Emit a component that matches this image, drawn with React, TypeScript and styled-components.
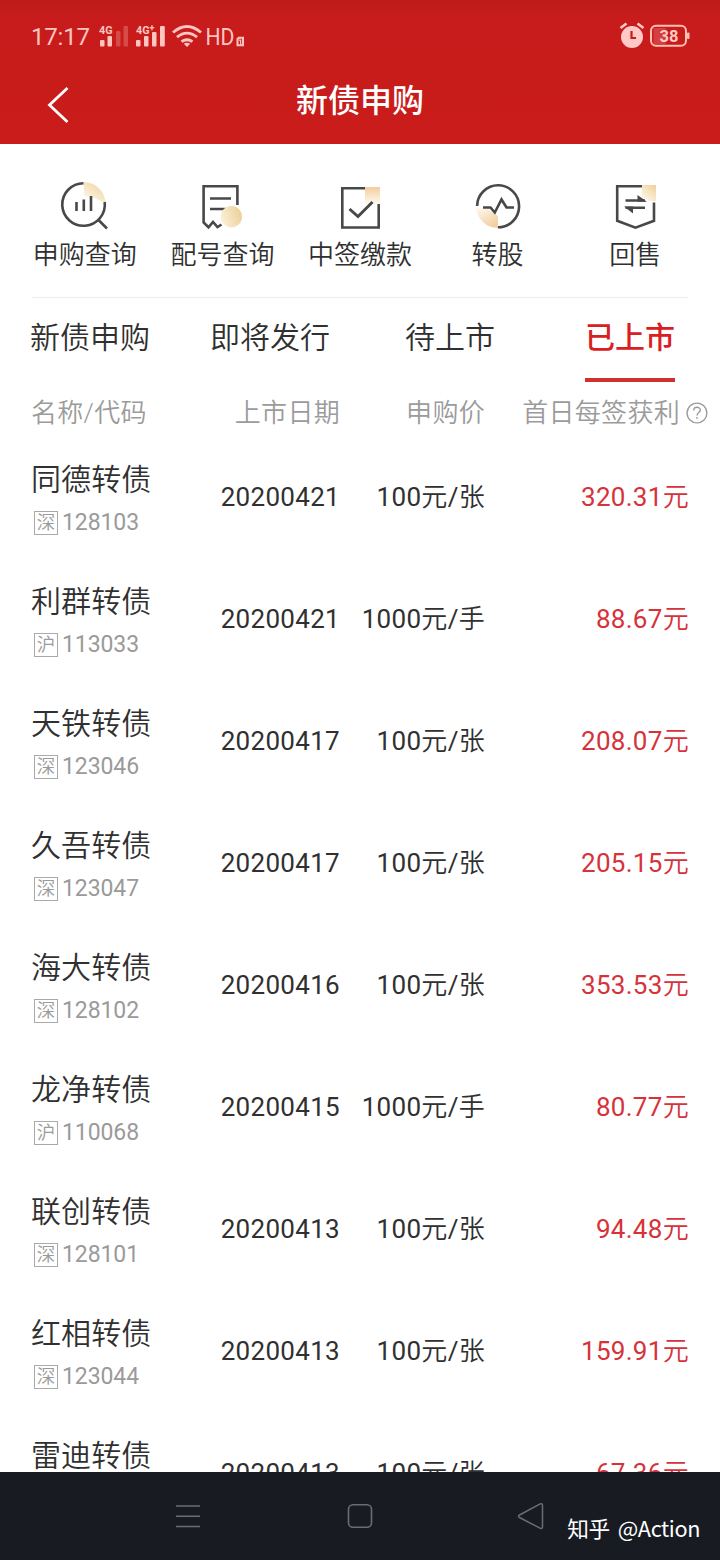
import React from "react";
import styled, { createGlobalStyle } from "styled-components";

const Global = createGlobalStyle`
  * { box-sizing: border-box; }
  body {
    margin: 0;
    background: #fff;
    font-family: Roboto, "Noto Sans CJK SC", sans-serif;
    font-weight: 350;
    color: #303030;
  }
`;

const Screen = styled.div`
  position: relative;
  display: flex;
  flex-direction: column;
  width: 720px;
  height: 1560px;
  overflow: hidden;
  background: #fff;
`;

const Header = styled.header`
  flex: none;
  height: 144px;
  background: linear-gradient(#bd1c1a 0, #c71c1b 18px, #c91c1b 100%);
`;

const StatusBar = styled.div`
  display: flex;
  justify-content: space-between;
  align-items: center;
  height: 72px;
  padding: 0 29px 0 31px;
  color: #ffc5c1;
`;

const StatusGroup = styled.div`
  display: flex;
  align-items: center;
  gap: 3px;
`;

const Clock = styled.span`
  width: 64px;
  font-size: 24px;
  font-weight: 400;
  line-height: 28px;
  letter-spacing: -0.2px;
  padding-top: 2px;
`;

const TitleBar = styled.div`
  display: grid;
  grid-template-columns: 120px 1fr 120px;
  align-items: center;
  height: 72px;
`;

const BackIcon = styled.svg`
  margin: -7px 0 0 46px;
`;

const Title = styled.h1`
  margin: 0;
  padding-bottom: 15px;
  text-align: center;
  font-size: 32px;
  line-height: 48px;
  font-weight: 500;
  color: #fff;
`;

const Actions = styled.nav`
  flex: none;
  display: grid;
  grid-template-columns: repeat(5, 1fr);
  height: 153px;
  padding: 34px 16px 0;
`;

const Action = styled.div`
  display: flex;
  flex-direction: column;
  align-items: center;
  font-size: 26px;
  line-height: 38px;
  white-space: nowrap;

  svg { margin-bottom: 2px; }
`;

const Divider = styled.div`
  flex: none;
  height: 1px;
  margin: 0 32px;
  background: #ececec;
`;

const Tabs = styled.div`
  flex: none;
  display: grid;
  grid-template-columns: repeat(4, 1fr);
  height: 84px;
`;

const Tab = styled.div<{ $active?: boolean }>`
  justify-self: center;
  height: 84px;
  padding-top: 18px;
  font-size: 30px;
  line-height: 44px;
  font-weight: ${(p) => (p.$active ? 500 : 350)};
  color: ${(p) => (p.$active ? "#d8211f" : "#303030")};
  border-bottom: 4px solid ${(p) => (p.$active ? "#cf3030" : "transparent")};
`;

const TableHead = styled.div`
  flex: none;
  display: grid;
  grid-template-columns: 150px 159px 145px 1fr;
  align-items: center;
  height: 54px;
  padding: 8px 12px 0 31px;
  font-size: 26px;
  line-height: 38px;
  letter-spacing: 0.3px;
  color: #9b9b9b;
`;

const HeadCell = styled.div`
  display: flex;
  justify-content: flex-end;
  align-items: center;
  gap: 6px;
  white-space: nowrap;

  &:first-child { justify-content: flex-start; }
`;

const List = styled.div`
  flex: 1;
  min-height: 0;
  overflow: hidden;
`;

const Row = styled.div`
  display: grid;
  grid-template-columns: 150px 159px 145px 1fr;
  align-items: center;
  height: 122px;
  padding: 0 31px;
`;

const Bond = styled.div`
  padding-top: 7px;
`;

const BondName = styled.div`
  font-size: 30px;
  line-height: 44px;
  letter-spacing: 0.1px;
  white-space: nowrap;
`;

const BondCode = styled.div`
  display: flex;
  align-items: center;
  gap: 4px;
  height: 42px;
  padding-left: 3px;
  font-size: 23px;
  font-weight: 400;
  letter-spacing: -0.1px;
  color: #9a9a9a;
`;

const Market = styled.span`
  display: flex;
  align-items: center;
  justify-content: center;
  width: 24px;
  height: 24px;
  border: 1px solid #aaa;
  font-size: 18.5px;
  font-weight: 350;
  line-height: 22px;
`;

const Value = styled.div<{ $red?: boolean }>`
  text-align: right;
  font-size: 26px;
  line-height: 38px;
  letter-spacing: 0.3px;
  white-space: nowrap;
  color: ${(p) => (p.$red ? "#d6323a" : "#303030")};
`;

const Digits = styled.span`
  font-weight: 400;
`;

const NavBar = styled.footer`
  flex: none;
  display: flex;
  height: 88px;
  padding-left: 102px;
  background: #191b22;

  svg { flex: none; margin-top: 28px; }
`;

const NavSlot = styled.div`
  display: flex;
  justify-content: center;
  width: 172px;
`;

const Watermark = styled.div`
  position: absolute;
  right: 20px;
  bottom: 15px;
  font-family: "Noto Sans CJK SC", sans-serif;
  font-weight: 400;
  font-size: 21.7px;
  line-height: 34px;
  letter-spacing: -0.4px;
  word-spacing: 3.5px;
  color: #fff;
`;

const ink = { fill: "none", stroke: "#484848", strokeWidth: 2.6 };

const Gold = ({ id }: { id: string }) => (
  <linearGradient id={id} x1="1" y1="0" x2="0.3" y2="1">
    <stop offset="0" stopColor="#efd09a" />
    <stop offset="1" stopColor="#fdf6e6" />
  </linearGradient>
);

const QueryIcon = () => (
  <svg width="56" height="56" viewBox="0.5 0 56 56">
    <defs><Gold id="g1" /></defs>
    <path d="M27 4A22 22 0 0 1 49 25L38 20L28 18Z" fill="url(#g1)" />
    <path d="M27 5.2A21.3 21.3 0 1 0 48.2 24M42 42L50.5 50.5" {...ink} />
    <path d="M20 24v9M27.3 21.5v11.5M34.5 18v15" {...ink} />
  </svg>
);

const NumberIcon = () => (
  <svg width="56" height="56" viewBox="0 0 56 56">
    <defs>
      <linearGradient id="g2" x1="1" y1="0.3" x2="0" y2="0.6">
        <stop offset="0" stopColor="#eccf96" />
        <stop offset="1" stopColor="#fbf0da" />
      </linearGradient>
    </defs>
    <path d="M43.4 27V8.3H9.6V44.5L14.5 49.3L19 44L23.5 49L27.5 46.5" {...ink} />
    <path d="M16 20.5H37M16 31H31.5" {...ink} />
    <circle cx="37.3" cy="38.8" r="10.7" fill="url(#g2)" />
  </svg>
);

const PayIcon = () => (
  <svg width="56" height="56" viewBox="0 0 56 56">
    <defs>
      <linearGradient id="g3" x1="0" y1="0" x2="0" y2="1">
        <stop offset="0" stopColor="#f3cd9c" />
        <stop offset="1" stopColor="#fffaf0" />
      </linearGradient>
    </defs>
    <path d="M33 9H48V26H33Z" fill="url(#g3)" />
    <path d="M33 10.3H10.3V49.5H46.7V26" {...ink} />
    <path d="M17.5 31L26 38.5L40.5 24" {...ink} strokeWidth={3} />
  </svg>
);

const ConvertIcon = () => (
  <svg width="56" height="56" viewBox="0 0 56 56">
    <defs>
      <linearGradient id="g4" x1="0" y1="0" x2="0.6" y2="1">
        <stop offset="0" stopColor="#fffaf0" />
        <stop offset="1" stopColor="#f3cfa0" />
      </linearGradient>
    </defs>
    <path d="M6 30A22 22 0 0 0 28 50V38L18 31Z" fill="url(#g4)" />
    <path d="M7.1 28A21 21 0 1 1 28 49.3" {...ink} />
    <path d="M13 29.5H20.5L24.8 34.5L31.5 21.5L36.5 29.5H44" {...ink} />
  </svg>
);

const SellIcon = () => (
  <svg width="56" height="56" viewBox="0 0 56 56">
    <defs><Gold id="g5" /></defs>
    <path d="M35 7H49V23H43L35 19Z" fill="url(#g5)" />
    <path d="M35 8.3H10.2V42.8L28.5 49.7L47 42.8V24.5" {...ink} />
    <path d="M18.5 22.5H38M18.5 29.8H38" {...ink} strokeWidth={2.4} />
    <path d="M30.5 17L40 23.7H30.5ZM26 35.5L17 28.6H26Z" fill="#484848" />
  </svg>
);

const SignalIcons = () => (
  <svg width="150" height="30" viewBox="0 0 150 30" fill="#ffc5c1">
    <g fontFamily="Roboto, sans-serif" fontSize="11.5" fontWeight="700">
      <text x="1" y="12.5" textLength="13.5" lengthAdjust="spacingAndGlyphs">4G</text>
      <text x="38" y="12.5" textLength="13.5" lengthAdjust="spacingAndGlyphs">4G</text>
      <text x="51.5" y="9.5" fontSize="9">+</text>
    </g>
    <rect x="2" y="19" width="4.5" height="6.5" rx="1" />
    <rect x="9.5" y="15" width="4.5" height="10.5" rx="1" />
    <g opacity=".28">
      <rect x="18" y="10" width="4.5" height="15.5" rx="1" />
      <rect x="25.5" y="5" width="4.5" height="20.5" rx="1" />
    </g>
    <rect x="38" y="19" width="4.5" height="6.5" rx="1" />
    <rect x="46" y="15" width="4.5" height="10.5" rx="1" />
    <rect x="54" y="11" width="4.5" height="14.5" rx="1" />
    <rect x="62" y="5" width="4.8" height="20.5" rx="1" />
    <g fill="none" stroke="#ffc5c1" strokeWidth="2.8">
      <path d="M75 11.5Q89 -.5 103 11.5M79 16.2Q89 8 99 16.2M83.5 20.7Q89 16.8 94.5 20.7" />
    </g>
    <path d="M85.8 22.7Q89 21 92.2 22.7L89 26Z" />
    <text x="107.5" y="24" fontFamily="Roboto, sans-serif" fontWeight="400" fontSize="23.5" textLength="29" lengthAdjust="spacingAndGlyphs">HD</text>
    <path d="M140.8 16.8H145V24.2H139.5V18Z" fill="none" stroke="#ffc5c1" strokeWidth="2" />
    <path d="M141 19.2H142.6V24" fill="none" stroke="#ffc5c1" strokeWidth="1.2" />
  </svg>
);

const AlarmIcon = () => (
  <svg width="28" height="28" viewBox="0 0 28 28">
    <circle cx="14" cy="15" r="11" fill="#ffc9c7" />
    <path d="M2.5 6L8.5 1.5M19.5 1.5L25.5 6" stroke="#ffc9c7" strokeWidth="2.6" />
    <path d="M13.5 9V16H18" stroke="#c71c1b" strokeWidth="2.2" fill="none" />
  </svg>
);

const BatteryIcon = () => (
  <svg width="42" height="24" viewBox="0 0 42 24">
    <rect x="4.5" y="4" width="12" height="16" fill="#ffc5c1" opacity=".22" />
    <rect x="2" y="1.8" width="35" height="20" rx="5" fill="none" stroke="#ffc0b4" strokeWidth="2" />
    <rect x="38" y="8.5" width="2.5" height="6.5" rx="1" fill="#ffc0b4" />
    <text x="20" y="18" textAnchor="middle" fontFamily="Roboto, sans-serif" fontSize="16.5" fontWeight="700" fill="#ffc9c7">38</text>
  </svg>
);

const HelpIcon = () => (
  <svg width="22" height="22" viewBox="0 0 22 22" fill="none" stroke="#9b9b9b" strokeWidth="1.4">
    <circle cx="11" cy="11" r="9.9" />
    <path d="M7.7 8.4C7.7 4.3 14.3 4.3 14.3 8.2C14.3 10.6 11 10.4 11 13.4M11 15V16.8" />
  </svg>
);

const actions = [
  { label: "申购查询", Icon: QueryIcon },
  { label: "配号查询", Icon: NumberIcon },
  { label: "中签缴款", Icon: PayIcon },
  { label: "转股", Icon: ConvertIcon },
  { label: "回售", Icon: SellIcon },
];

const tabs = ["新债申购", "即将发行", "待上市", "已上市"];

const bonds = [
  ["同德转债", "深", "128103", "20200421", "100", "张", "320.31"],
  ["利群转债", "沪", "113033", "20200421", "1000", "手", "88.67"],
  ["天铁转债", "深", "123046", "20200417", "100", "张", "208.07"],
  ["久吾转债", "深", "123047", "20200417", "100", "张", "205.15"],
  ["海大转债", "深", "128102", "20200416", "100", "张", "353.53"],
  ["龙净转债", "沪", "110068", "20200415", "1000", "手", "80.77"],
  ["联创转债", "深", "128101", "20200413", "100", "张", "94.48"],
  ["红相转债", "深", "123044", "20200413", "100", "张", "159.91"],
  ["雷迪转债", "", "", "20200413", "100", "张", "67.36"],
];

export default function App() {
  return (
    <Screen>
      <Global />
      <Header>
        <StatusBar>
          <StatusGroup>
            <Clock>17:17</Clock>
            <SignalIcons />
          </StatusGroup>
          <StatusGroup>
            <AlarmIcon />
            <BatteryIcon />
          </StatusGroup>
        </StatusBar>
        <TitleBar>
          <BackIcon width="26" height="38" viewBox="0 0 26 38">
            <path d="M21.5 2L3.5 19L21.5 36" fill="none" stroke="#fff" strokeWidth="2.8" />
          </BackIcon>
          <Title>新债申购</Title>
        </TitleBar>
      </Header>

      <Actions>
        {actions.map(({ label, Icon }) => (
          <Action key={label}>
            <Icon />
            {label}
          </Action>
        ))}
      </Actions>
      <Divider />

      <Tabs>
        {tabs.map((t) => (
          <Tab key={t} $active={t === "已上市"}>{t}</Tab>
        ))}
      </Tabs>

      <TableHead>
        <HeadCell>名称/代码</HeadCell>
        <HeadCell>上市日期</HeadCell>
        <HeadCell>申购价</HeadCell>
        <HeadCell>首日每签获利<HelpIcon /></HeadCell>
      </TableHead>

      <List>
        {bonds.map(([name, market, code, date, price, unit, profit]) => (
          <Row key={name}>
            <Bond>
              <BondName>{name}</BondName>
              <BondCode>{market && <Market>{market}</Market>}{code}</BondCode>
            </Bond>
            <Value><Digits>{date}</Digits></Value>
            <Value><Digits>{price}</Digits>元<Digits>/</Digits>{unit}</Value>
            <Value $red><Digits>{profit}</Digits>元</Value>
          </Row>
        ))}
      </List>

      <NavBar>
        <NavSlot>
          <svg width="32" height="32" viewBox="0 0 32 32" stroke="#6c6d72" strokeWidth="1.6">
            <path d="M4 6H28M4 16.3H28M4 26.5H28" />
          </svg>
        </NavSlot>
        <NavSlot>
          <svg width="32" height="32" viewBox="0 0 32 32" fill="none" stroke="#6c6d72" strokeWidth="1.6">
            <rect x="4.5" y="4.8" width="23" height="22.5" rx="4.5" />
          </svg>
        </NavSlot>
        <NavSlot>
          <svg width="32" height="32" viewBox="1 0 32 32" fill="none" stroke="#6c6d72" strokeWidth="1.5" strokeLinejoin="round">
            <path d="M25.2 3.9Q27.5 3 27.5 5.5V26.5Q27.5 29.5 25 28.2L4.5 17.5Q2.5 16.2 4.5 15Z" />
          </svg>
        </NavSlot>
      </NavBar>
      <Watermark>知乎 @Action</Watermark>
    </Screen>
  );
}
